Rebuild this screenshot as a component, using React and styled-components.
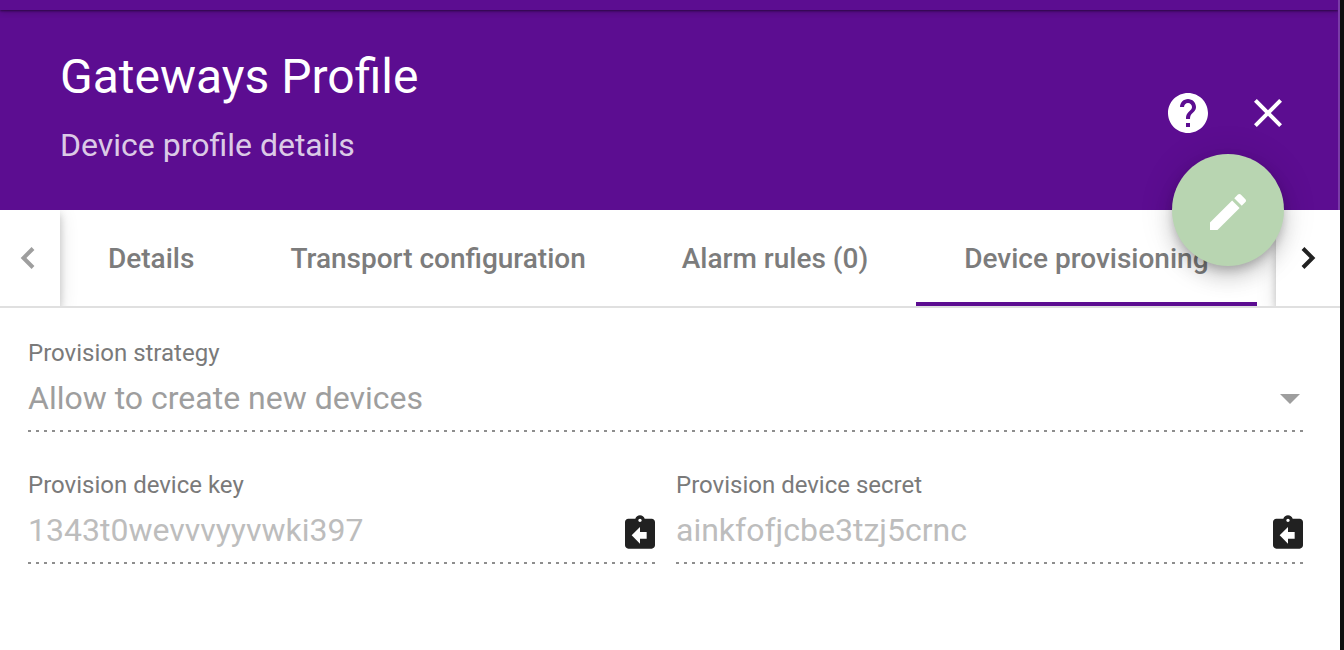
import React from 'react';
import styled, { createGlobalStyle } from 'styled-components';

const purple = '#5c0d91';

const GlobalStyle = createGlobalStyle`
  *, *::before, *::after { box-sizing: border-box; }
  body {
    margin: 0;
    background: #fff;
    font-family: Roboto, "Liberation Sans", sans-serif;
  }
  button, input, select { font: inherit; }
`;

const Page = styled.div`
  min-height: 100vh;
  border-right: 4px solid #0e0e0e;
  background: #fff;
`;

const HeaderWrap = styled.div`
  position: relative;
  z-index: 2;
  border-right: 2px solid #7a3ba8;
  background: ${purple};
`;

const TopStrip = styled.div`
  height: 10px;
  background: ${purple};
  box-shadow: 0 1px 2px rgba(0, 0, 0, 0.45), 0 2px 6px rgba(0, 0, 0, 0.2);
  clip-path: inset(0 0 -10px 0);
`;

const Header = styled.header`
  display: flex;
  justify-content: space-between;
  color: #fff;
`;

const Titles = styled.div`
  display: flex;
  flex-direction: column;
  gap: 20px;
  padding: 39px 0 45px 60px;
`;

const Title = styled.h1`
  margin: 0;
  font-size: 48px;
  line-height: 56px;
  font-weight: 400;
`;

const Subtitle = styled.p`
  margin: 0;
  font-size: 32px;
  line-height: 40px;
  color: rgba(255, 255, 255, 0.8);
`;

const Actions = styled.div`
  display: flex;
  align-items: center;
  padding: 6px 30px 0 0;
`;

const IconButton = styled.button`
  display: flex;
  align-items: center;
  justify-content: center;
  width: ${(p) => p.$width}px;
  height: ${(p) => p.$height}px;
  padding: 0;
  border: 0;
  background: none;
  color: inherit;
`;

const Fab = styled.button`
  position: absolute;
  right: 54px;
  bottom: -56px;
  display: flex;
  align-items: center;
  justify-content: center;
  width: 112px;
  height: 112px;
  padding: 4px 0 0;
  border: 0;
  border-radius: 50%;
  background: #b8d5b1;
  color: #fff;
  box-shadow: 0 6px 10px -2px rgba(0, 0, 0, 0.2), 0 12px 20px rgba(0, 0, 0, 0.14),
    0 2px 36px rgba(0, 0, 0, 0.12);
`;

const TabBar = styled.nav`
  display: flex;
  height: 98px;
  border-bottom: 2px solid #e0e0e0;
  overflow: hidden;
`;

const Pager = styled.button`
  position: relative;
  z-index: 1;
  display: flex;
  flex: none;
  align-items: center;
  justify-content: center;
  width: ${(p) => (p.$before ? 60 : 64)}px;
  padding: ${(p) => (p.$before ? '0 4px 0 0' : '0')};
  border: 0;
  background: #fff;
  color: ${(p) => (p.disabled ? '#9e9e9e' : '#212121')};
  box-shadow: 0 4px 8px rgba(0, 0, 0, 0.2), 0 4px 20px rgba(0, 0, 0, 0.12);
`;

const TabList = styled.div`
  display: flex;
  flex: 1;
  min-width: 0;
  overflow: hidden;
`;

const Tab = styled.button`
  flex: none;
  padding: 6px 48px 0;
  border: 0;
  border-bottom: 4px solid ${(p) => (p.$active ? purple : 'transparent')};
  background: none;
  color: #7c7c7c;
  font-size: 28px;
  line-height: 32px;
  font-weight: 500;
  white-space: nowrap;
`;

const Form = styled.form`
  display: grid;
  grid-template-columns: 1fr 1fr;
  gap: 36px 20px;
  padding: 28px 36px 28px 28px;
`;

const Field = styled.div`
  position: relative;
  display: flex;
  flex-direction: column;
  grid-column: ${(p) => (p.$wide ? '1 / -1' : 'auto')};
  height: 96px;
  padding-top: 1px;
  background: linear-gradient(to right, #8e8e8e 0 3px, transparent 3px) left bottom / 8px 2px repeat-x;
`;

const Label = styled.label`
  font-size: 24px;
  line-height: 32px;
  color: #7a7a7a;
`;

const ControlRow = styled.div`
  display: flex;
  gap: 8px;
  height: 58px;
  padding-right: 1px;
`;

const TextInput = styled.input`
  flex: 1;
  min-width: 0;
  padding: 0;
  border: 0;
  background: none;
  font-size: 32px;
  line-height: 40px;
  color: #bdbdbd;
`;

const Select = styled.select`
  flex: 1;
  min-width: 0;
  padding: 0;
  border: 0;
  appearance: none;
  background: none;
  font-size: 32px;
  line-height: 40px;
  color: #9e9e9e;
  opacity: 1;
`;

const SelectArrow = styled.svg`
  position: absolute;
  right: 4px;
  top: 58px;
  pointer-events: none;
`;

const CopyButton = styled(IconButton)`
  padding-top: 6px;
  color: #212121;
`;

function Icon({ path, size = 48 }) {
  return (
    <svg width={size} height={size} viewBox="0 0 24 24" fill="currentColor" aria-hidden="true">
      <path d={path} />
    </svg>
  );
}

const icons = {
  help: 'M12 2C6.48 2 2 6.48 2 12s4.48 10 10 10 10-4.48 10-10S17.52 2 12 2zm1 17h-2v-2h2v2zm2.07-7.75l-.9.92C13.45 12.9 13 13.5 13 15h-2v-.5c0-1.1.45-2.1 1.17-2.83l1.24-1.26c.37-.36.59-.86.59-1.41 0-1.1-.9-2-2-2s-2 .9-2 2H8c0-2.21 1.79-4 4-4s4 1.79 4 4c0 .88-.36 1.68-.93 2.25z',
  close: 'M19 6.41L17.59 5 12 10.59 6.41 5 5 6.41 10.59 12 5 17.59 6.41 19 12 13.41 17.59 19 19 17.59 13.41 12z',
  edit: 'M3 17.25V21h3.75L17.81 9.94l-3.75-3.75L3 17.25zM20.71 7.04c.39-.39.39-1.02 0-1.41l-2.34-2.34c-.39-.39-1.02-.39-1.41 0l-1.83 1.83 3.75 3.75 1.83-1.83z',
  clipboard: 'M19 3h-4.18C14.4 1.84 13.3 1 12 1c-1.3 0-2.4.84-2.82 2H5c-1.1 0-2 .9-2 2v14c0 1.1.9 2 2 2h14c1.1 0 2-.9 2-2V5c0-1.1-.9-2-2-2zm-7 0c.55 0 1 .45 1 1s-.45 1-1 1-1-.45-1-1 .45-1 1-1zm4 12h-4v3l-5-5 5-5v3h4v4z',
};

function Chevron({ left }) {
  return (
    <svg width="16" height="24" viewBox="0 0 16 24" fill="none" stroke="currentColor" strokeWidth="4" aria-hidden="true">
      <path d={left ? 'M13 2.5L3.5 12l9.5 9.5' : 'M3 2.5l9.5 9.5L3 21.5'} />
    </svg>
  );
}

function CopyField({ id, label, value }) {
  return (
    <Field>
      <Label htmlFor={id}>{label}</Label>
      <ControlRow>
        <TextInput id={id} defaultValue={value} disabled />
        <CopyButton type="button" $width={30} $height={56} aria-label={`Copy ${label.toLowerCase()}`}>
          <svg width="30" height="34" viewBox="3 1 18 20" fill="currentColor" aria-hidden="true">
            <path d={icons.clipboard} />
          </svg>
        </CopyButton>
      </ControlRow>
    </Field>
  );
}

const tabs = ['Details', 'Transport configuration', 'Alarm rules (0)', 'Device provisioning'];

export default function App() {
  return (
    <Page>
      <GlobalStyle />
      <HeaderWrap>
        <TopStrip />
        <Header>
          <Titles>
            <Title>Gateways Profile</Title>
            <Subtitle>Device profile details</Subtitle>
          </Titles>
          <Actions>
            <IconButton type="button" $width={80} $height={80} aria-label="Help">
              <Icon path={icons.help} />
            </IconButton>
            <IconButton type="button" $width={80} $height={80} aria-label="Close">
              <Icon path={icons.close} />
            </IconButton>
          </Actions>
        </Header>
        <Fab type="button" aria-label="Edit">
          <Icon path={icons.edit} />
        </Fab>
      </HeaderWrap>
      <TabBar>
        <Pager type="button" $before disabled aria-label="Previous tabs">
          <Chevron left />
        </Pager>
        <TabList role="tablist">
          {tabs.map((name, i) => (
            <Tab key={name} type="button" role="tab" aria-selected={i === 3} $active={i === 3}>
              {name}
            </Tab>
          ))}
        </TabList>
        <Pager type="button" aria-label="Next tabs">
          <Chevron />
        </Pager>
      </TabBar>
      <Form>
        <Field $wide>
          <Label htmlFor="strategy">Provision strategy</Label>
          <ControlRow>
            <Select id="strategy" disabled>
              <option>Allow to create new devices</option>
            </Select>
          </ControlRow>
          <SelectArrow width="20" height="10" viewBox="0 0 20 10" aria-hidden="true">
            <path d="M0 0h20L10 10z" fill="#9e9e9e" />
          </SelectArrow>
        </Field>
        <CopyField id="device-key" label="Provision device key" value="1343t0wevvvyyvwki397" />
        <CopyField id="device-secret" label="Provision device secret" value="ainkfofjcbe3tzj5crnc" />
      </Form>
    </Page>
  );
}
